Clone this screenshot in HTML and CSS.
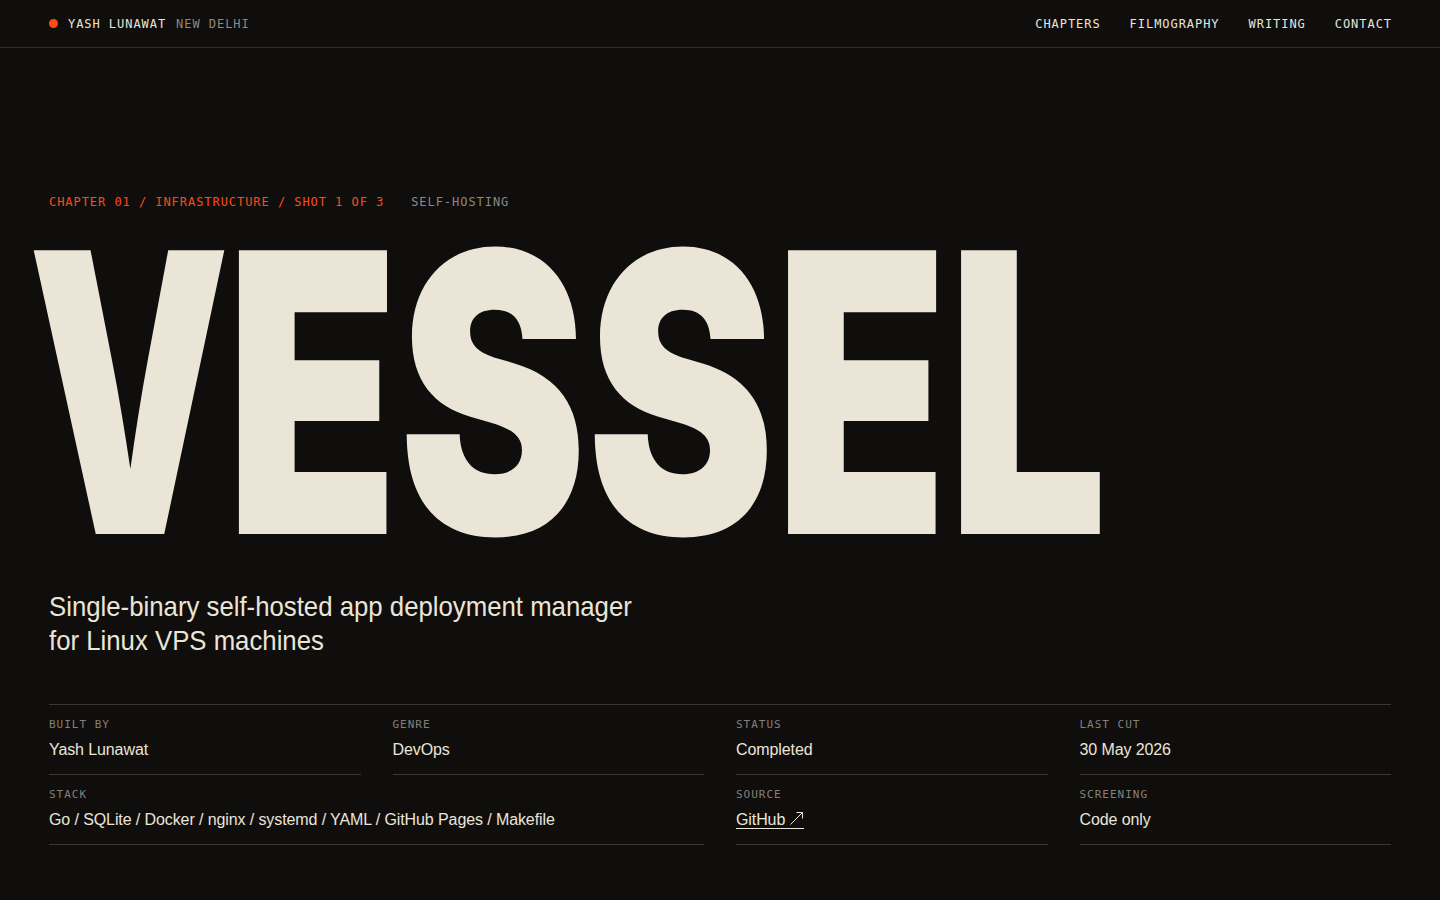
FILE: index.html
```html
<!DOCTYPE html>
<html lang="en">
<head>
<meta charset="utf-8">
<title>Vessel — Yash Lunawat</title>
<link rel="stylesheet" href="styles.css">
</head>
<body>
<header class="topbar">
  <div class="brand">
    <span class="dot"></span>
    <span class="name">YASH LUNAWAT</span>
    <span class="city">NEW DELHI</span>
  </div>
  <nav class="nav">
    <a href="#">CHAPTERS</a>
    <a href="#">FILMOGRAPHY</a>
    <a href="#">WRITING</a>
    <a href="#">CONTACT</a>
  </nav>
</header>
<main class="hero">
  <div class="kicker">
    <span class="crumbs">CHAPTER 01 / INFRASTRUCTURE / SHOT 1 OF 3</span>
    <span class="tag">SELF-HOSTING</span>
  </div>
  <div class="title-wrap">
    <h1 class="title"><span class="kern-v">V</span>ESSEL</h1>
  </div>
  <div class="lede-wrap">
    <p class="lede">Single-binary self-hosted app deployment manager<br>for Linux VPS machines</p>
  </div>
  <dl class="meta">
    <div class="cell">
      <dt>BUILT BY</dt>
      <dd>Yash Lunawat</dd>
    </div>
    <div class="cell">
      <dt>GENRE</dt>
      <dd>DevOps</dd>
    </div>
    <div class="cell">
      <dt>STATUS</dt>
      <dd>Completed</dd>
    </div>
    <div class="cell">
      <dt>LAST CUT</dt>
      <dd>30 May 2026</dd>
    </div>
    <div class="cell wide">
      <dt>STACK</dt>
      <dd>Go / SQLite / Docker / nginx / systemd / YAML / GitHub Pages / Makefile</dd>
    </div>
    <div class="cell">
      <dt>SOURCE</dt>
      <dd><a class="link" href="#">GitHub <svg class="arrow" width="15" height="15" viewBox="0 0 15 15" aria-hidden="true"><path d="M1.5 13.5 L13.5 1.5 M7.5 1.5 H13.5 V7.5" fill="none" stroke="currentColor" stroke-width="1"/></svg></a></dd>
    </div>
    <div class="cell">
      <dt>SCREENING</dt>
      <dd>Code only</dd>
    </div>
  </dl>
</main>
</body>
</html>
```

FILE: styles.css
```css
* { box-sizing: border-box; }

html, body {
  margin: 0;
  padding: 0;
  background: #0f0e0d;
  color: #ebe5d8;
}

body {
  font-family: "Liberation Sans", Arial, sans-serif;
  overflow-x: hidden;
}

a { color: inherit; text-decoration: none; }

.topbar {
  height: 48px;
  border-bottom: 1px solid #2e2c2a;
  display: flex;
  align-items: center;
  justify-content: space-between;
  padding: 0 48px 0 49px;
  font-family: "DejaVu Sans Mono", "Liberation Mono", monospace;
  font-size: 12px;
  letter-spacing: 0.95px;
  line-height: 16px;
}

.brand {
  display: flex;
  align-items: center;
}

.dot {
  width: 9px;
  height: 9px;
  border-radius: 50%;
  background: #ff4a17;
  margin-right: 10px;
}

.name { color: #ebe5d8; }

.city {
  color: #8d8880;
  margin-left: 10px;
}

.nav {
  display: flex;
  gap: 29px;
}

.nav a { color: #ebe5d8; }

.hero {
  padding: 146px 49px 0;
}

.kicker {
  font-family: "DejaVu Sans Mono", "Liberation Mono", monospace;
  font-size: 12px;
  line-height: 16px;
  letter-spacing: 0.95px;
  display: flex;
  gap: 27px;
}

.crumbs { color: #ff4a17; }
.tag { color: #8d8880; }

.title-wrap {
  margin: 36px 0 0 -21px;
  height: 292px;
  overflow-x: clip;
}

.title {
  margin: 0;
  font-family: Inter, Roboto, "Liberation Sans", sans-serif;
  font-weight: 900;
  font-size: 390px;
  line-height: 0.75;
  letter-spacing: 0;
  white-space: nowrap;
  display: inline-block;
  transform: scaleX(0.724);
  transform-origin: left center;
}

.kern-v {
  display: inline-block;
  transform: scaleX(0.9);
  transform-origin: left center;
  margin-right: -37px;
}

.lede-wrap {
  margin-top: 52px;
}

.lede {
  margin: 0;
  font-family: "Liberation Sans", sans-serif;
  font-size: 28px;
  line-height: 34px;
  color: #ebe5d8;
  white-space: nowrap;
  display: inline-block;
  transform: scaleX(0.92);
  transform-origin: left center;
}

.meta {
  margin: 46px 0 0;
  border-top: 1px solid #3a3836;
  display: grid;
  grid-template-columns: repeat(4, 1fr);
  column-gap: 32px;
}

.cell {
  padding: 13px 0 13px;
  border-bottom: 1px solid #3a3836;
  display: flex;
  flex-direction: column;
  gap: 7px;
}

.cell.wide { grid-column: span 2; }

.cell dt {
  font-family: "DejaVu Sans Mono", "Liberation Mono", monospace;
  font-size: 11px;
  line-height: 14px;
  letter-spacing: 1px;
  color: #85807a;
}

.cell dd {
  margin: 0;
  font-size: 16px;
  line-height: 22px;
  letter-spacing: -0.1px;
  color: #ebe5d8;
}

.link {
  display: inline-flex;
  align-items: center;
  gap: 4px;
  line-height: 16px;
  border-bottom: 1px solid #ebe5d8;
}

.arrow { display: block; margin-top: -4px; }
```
